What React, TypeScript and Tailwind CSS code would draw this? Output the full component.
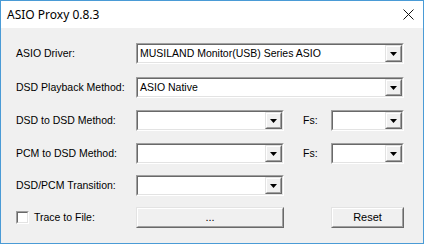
const font = { fontFamily: "'Liberation Sans', Arial, sans-serif" };

const Sunken = ({ className = "", children }: { className?: string; children?: React.ReactNode }) => (
  <div className={`shrink-0 border border-t-[#a0a0a0] border-l-[#a0a0a0] border-b-white border-r-white ${className}`}>
    <div className="h-full w-full border border-t-[#696969] border-l-[#696969] border-b-[#e3e3e3] border-r-[#e3e3e3] bg-white">
      {children}
    </div>
  </div>
);

const Raised = ({ className = "", children }: { className?: string; children?: React.ReactNode }) => (
  <div className={`shrink-0 border border-t-[#e3e3e3] border-l-[#e3e3e3] border-b-[#696969] border-r-[#696969] ${className}`}>
    <div className="flex h-full w-full items-center justify-center border border-t-white border-l-white border-b-[#a0a0a0] border-r-[#a0a0a0] bg-[#f0f0f0]">
      {children}
    </div>
  </div>
);

const Combo = ({ value, className = "" }: { value?: string; className?: string }) => (
  <Sunken className={`h-[21px] ${className}`}>
    <div className="flex h-full items-center">
      <span className="flex-1 truncate whitespace-nowrap pl-[2px] text-[10.5px] leading-none text-black" style={font}>
        {value}
      </span>
      <Raised className="h-[17px] w-[17px]">
        <svg width="7" height="4" viewBox="0 0 7 4">
          <path d="M0 0h7L3.5 4z" fill="#000" />
        </svg>
      </Raised>
    </div>
  </Sunken>
);

const Label = ({ children }: { children: React.ReactNode }) => (
  <span className="w-[135px] shrink-0 whitespace-nowrap pl-[15px] text-[10.5px] text-black" style={font}>
    {children}
  </span>
);

const Fs = () => (
  <span className="ml-[19px] w-[28px] shrink-0 text-[10.5px] text-black" style={font}>
    Fs:
  </span>
);

export default function App() {
  return (
    <div className="flex h-[244px] w-[424px] flex-col overflow-hidden border border-[#4a9bd6] bg-white">
      {/* title bar */}
      <div className="flex h-[27px] shrink-0 items-center justify-between bg-white pl-[6px] pr-[8px]">
        <span className="text-[12px] text-black" style={{ fontFamily: "'Noto Sans', 'Open Sans', sans-serif" }}>
          ASIO Proxy 0.8.3
        </span>
        <svg width="11" height="11" viewBox="0 0 11 11" className="mr-[1px]">
          <path d="M0.5 0.5l10 10M10.5 0.5l-10 10" stroke="#111" strokeWidth="1" />
        </svg>
      </div>

      {/* client area */}
      <div className="flex flex-1 flex-col bg-[#f0f0f0]">
        <div className="mt-[15px] flex items-center">
          <Label>ASIO Driver:</Label>
          <Combo value="MUSILAND Monitor(USB) Series ASIO" className="w-[268px]" />
        </div>
        <div className="mt-[13px] flex items-center">
          <Label>DSD Playback Method:</Label>
          <Combo value="ASIO Native" className="w-[268px]" />
        </div>
        <div className="mt-[12px] flex items-center">
          <Label>DSD to DSD Method:</Label>
          <Combo className="w-[148px]" />
          <Fs />
          <Combo className="w-[73px]" />
        </div>
        <div className="mt-[12px] flex items-center">
          <Label>PCM to DSD Method:</Label>
          <Combo className="w-[148px]" />
          <Fs />
          <Combo className="w-[73px]" />
        </div>
        <div className="mt-[11px] flex items-center">
          <Label>DSD/PCM Transition:</Label>
          <Combo className="w-[148px]" />
        </div>
        <div className="mt-[11px] flex items-center">
          <div className="flex w-[135px] shrink-0 items-center pl-[15px]">
            <Sunken className="h-[13px] w-[13px]" />
            <span className="ml-[5px] whitespace-nowrap text-[10.5px] text-black" style={font}>Trace to File:</span>
          </div>
          <Raised className="h-[21px] w-[148px]">
            <span className="text-[11px] leading-none text-black" style={font}>...</span>
          </Raised>
          <Raised className="ml-[47px] h-[21px] w-[73px]">
            <span className="text-[11px] leading-none text-black" style={font}>Reset</span>
          </Raised>
        </div>
      </div>
    </div>
  );
}
